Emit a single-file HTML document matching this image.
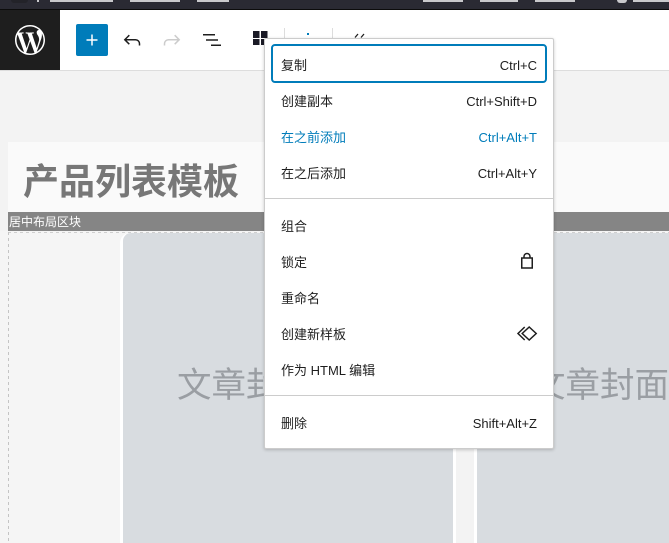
<!DOCTYPE html>
<html><head><meta charset="utf-8">
<style>
html,body{margin:0;padding:0;width:669px;height:543px;overflow:hidden;background:#f3f3f3}
body{position:relative;font-family:"Liberation Sans","Noto Sans CJK SC",sans-serif;color:#1e1e1e}
.a{position:absolute}
.m{position:absolute;left:281px;font-size:13px;line-height:18px;white-space:nowrap}
.s{position:absolute;right:132px;font-size:13px;line-height:18px;white-space:nowrap;text-align:right}
.blue{color:#007cba}
.f{position:absolute;top:0;height:2px;background:#c9c9cc}
</style></head><body>
<div class="a" style="left:0;top:0;width:669px;height:9px;background:#2a2a33"></div>
<div class="a" style="left:0;top:9px;width:669px;height:1px;background:#0c0c0c"></div>
<div class="a" style="left:11px;top:0;width:17px;height:3px;background:#232329;border-radius:0 0 8px 8px"></div>
<div class="f" style="left:37px;width:2px"></div>
<div class="f" style="left:50px;width:63px"></div>
<div class="f" style="left:130px;width:50px"></div>
<div class="f" style="left:197px;width:32px"></div>
<div class="f" style="left:423px;width:40px"></div>
<div class="f" style="left:480px;width:38px"></div>
<div class="f" style="left:535px;width:40px"></div>
<div class="f" style="left:617px;width:10px;height:3px;border-radius:0 0 5px 5px"></div>
<div class="f" style="left:633px;width:36px"></div>

<div class="a" style="left:0;top:10px;width:669px;height:60px;background:#fff"></div>
<div class="a" style="left:0;top:70px;width:669px;height:1px;background:#ddd"></div>
<div class="a" style="left:0;top:10px;width:60px;height:60px;background:#1e1e1e"></div>
<svg class="a" style="left:15px;top:25px" width="30" height="30" viewBox="0 0 24 24"><path fill="#fff" d="M21.469 6.825c.84 1.537 1.318 3.3 1.318 5.175 0 3.979-2.156 7.456-5.363 9.325l3.295-9.527c.615-1.54.82-2.771.82-3.864 0-.405-.026-.78-.07-1.11m-7.981.105c.647-.03 1.232-.105 1.232-.105.582-.075.514-.93-.067-.899 0 0-1.755.135-2.88.135-1.064 0-2.85-.15-2.85-.15-.585-.03-.661.855-.075.885 0 0 .54.061 1.125.09l1.68 4.605-2.37 7.08L5.354 6.9c.649-.03 1.234-.1 1.234-.1.585-.075.516-.93-.065-.896 0 0-1.746.138-2.874.138-.2 0-.438-.008-.69-.015C4.911 3.15 8.235 1.215 12 1.215c2.809 0 5.365 1.072 7.286 2.833-.046-.003-.091-.009-.141-.009-1.06 0-1.812.923-1.812 1.914 0 .89.513 1.643 1.06 2.531.411.72.89 1.643.89 2.977 0 .915-.354 1.994-.821 3.479l-1.075 3.585-3.9-11.61.001.014zM12 22.784c-1.059 0-2.081-.153-3.048-.437l3.237-9.406 3.315 9.087c.024.053.05.101.078.149-1.12.393-2.325.609-3.582.609M1.211 12c0-1.564.336-3.05.935-4.39L7.29 21.709C3.694 19.96 1.212 16.271 1.211 12M12 0C5.385 0 0 5.385 0 12s5.385 12 12 12 12-5.385 12-12S18.615 0 12 0"/></svg>

<div class="a" style="left:76px;top:24px;width:32px;height:32px;background:#007cba;border-radius:2px"></div>
<svg class="a" style="left:0;top:0" width="669" height="70" fill="none">
<path d="M92 34.500v11M86.500 40h11" stroke="#fff" stroke-width="1.5"/>
<path d="M129.300 35.200L124.800 39.700l4.500 4.500M124.800 39.700h10.700a4 4 0 0 1 4 4v1.800" stroke="#1e1e1e" stroke-width="1.5"/>
<path d="M174.700 35.200l4.500 4.500-4.500 4.500M179.200 39.700H168.500a4 4 0 0 0-4 4v1.800" stroke="#ccc" stroke-width="1.5"/>
<path d="M203 34.700h12M206 40h12M211 45.300h10" stroke="#1e1e1e" stroke-width="1.500"/>
<path d="M253 31h6.500v7H253zM261 31h6.500v7H261zM253 39h6.500v6H253zM261 39h6.500v6H261z" fill="#1a1a26"/>
<path d="M284.500 28v10M332.500 28v10" stroke="#ddd"/>
<rect x="307" y="33" width="2" height="2" fill="#007cba"/>
<path d="M358 34l-3 3.500M364 34l-3 3.500" stroke="#1e1e1e" stroke-width="1.3"/>
</svg>

<div class="a" style="left:8px;top:142px;width:661px;height:70px;background:#fafafa"></div>
<div class="a" style="left:23px;top:159px;font-size:36px;line-height:46px;font-weight:700;color:#777;white-space:nowrap">产品列表模板</div>
<div class="a" style="left:8px;top:212px;width:661px;height:19px;background:#858585"></div>
<div class="a" style="left:9px;top:214px;font-size:12px;line-height:17px;color:#fff;white-space:nowrap">居中布局区块</div>

<div class="a" style="left:0;top:231px;width:669px;height:312px;background:#f5f5f5"></div>
<div class="a" style="left:8px;top:232px;width:661px;height:1px;background:repeating-linear-gradient(90deg,#cfcfcf 0 3px,transparent 3px 6px)"></div>
<div class="a" style="left:8px;top:232px;width:1px;height:311px;background:repeating-linear-gradient(180deg,#c4c4c4 0 3px,transparent 3px 6px)"></div>
<div class="a" style="left:120px;top:233px;width:336px;height:310px;background:#fff;border-radius:10px 10px 0 0"></div>
<div class="a" style="left:123px;top:233px;width:330px;height:310px;background:#d8dce0;border-radius:8px 8px 0 0"></div>
<div class="a" style="left:456px;top:233px;width:18px;height:310px;background:#f3f3f3"></div>
<div class="a" style="left:474px;top:233px;width:195px;height:310px;background:#fff;border-radius:10px 0 0 0"></div>
<div class="a" style="left:477px;top:233px;width:192px;height:310px;background:#d8dce0;border-radius:8px 0 0 0"></div>
<div class="a" style="left:177px;top:363px;font-size:34.5px;line-height:46px;color:#9a9ea3;white-space:nowrap">文章封面</div>
<div class="a" style="left:531px;top:363px;font-size:34.5px;line-height:46px;color:#9a9ea3;white-space:nowrap">文章封面</div>

<div class="a" style="left:264px;top:38px;width:288px;height:409px;background:#fff;border:1px solid #ccc;border-radius:2px;box-shadow:0 1px 3px rgba(0,0,0,.2)"></div>
<div class="a" style="left:271px;top:44px;width:272px;height:35px;border:2px solid #007cba;border-radius:4px"></div>
<div class="a" style="left:265px;top:198px;width:288px;height:1px;background:#ccc"></div>
<div class="a" style="left:265px;top:395px;width:288px;height:1px;background:#ccc"></div>

<div class="m" style="top:57px">复制</div><div class="s" style="top:57px">Ctrl+C</div>
<div class="m" style="top:93px">创建副本</div><div class="s" style="top:93px">Ctrl+Shift+D</div>
<div class="m blue" style="top:129px">在之前添加</div><div class="s blue" style="top:129px">Ctrl+Alt+T</div>
<div class="m" style="top:165px">在之后添加</div><div class="s" style="top:165px">Ctrl+Alt+Y</div>
<div class="m" style="top:218px">组合</div>
<div class="m" style="top:254px">锁定</div>
<div class="m" style="top:290px">重命名</div>
<div class="m" style="top:326px">创建新样板</div>
<div class="m" style="top:362px">作为 HTML 编辑</div>
<div class="m" style="top:415px">删除</div><div class="s" style="top:415px">Shift+Alt+Z</div>

<svg class="a" style="left:510px;top:245px" width="35" height="100" fill="none" stroke="#1e1e1e" stroke-width="1.5">
<rect x="11.750" y="13" width="10.500" height="10"/>
<path d="M14 13v-1.500a3 3 0 0 1 6 0V13"/>
<path d="M14.700 82L8 88.500l6.700 6.500"/>
<path d="M19.200 82l7 6.500-7 6.500-7-6.500z"/>
</svg>
</body></html>
